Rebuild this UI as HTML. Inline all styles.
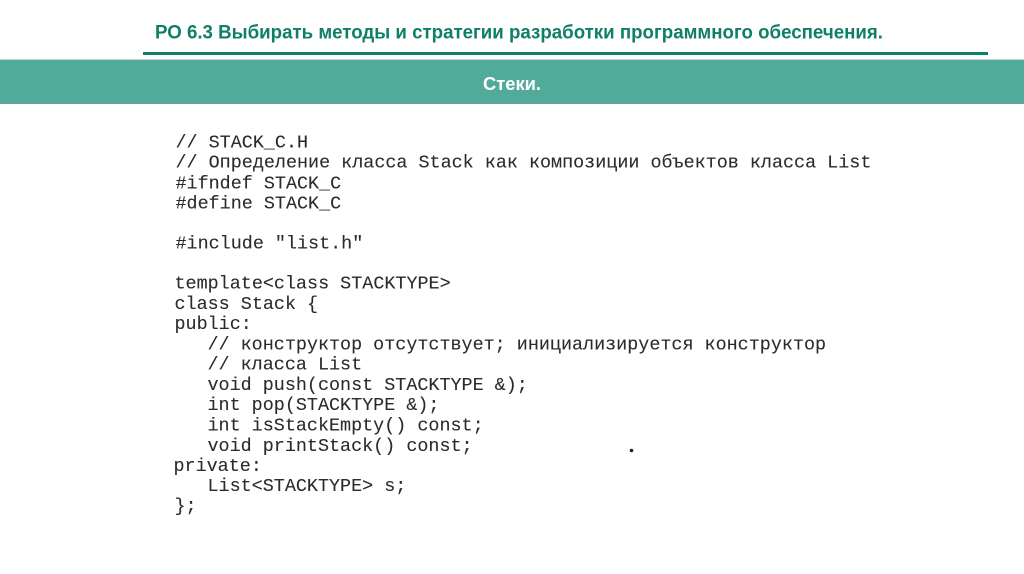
<!DOCTYPE html>
<html lang="ru">
<head>
<meta charset="utf-8">
<title>Стеки</title>
<style>
html,body{margin:0;padding:0;background:#fff;width:1024px;height:574px;overflow:hidden}
svg{display:block;position:absolute;left:0;top:0}
.code{filter:blur(.35px)}
.c{font-family:"Liberation Mono","DejaVu Sans Mono",monospace;font-size:18.42px;fill:#2b2b2b;stroke:#2b2b2b;stroke-width:.1px;white-space:pre}
.t{font-family:"Liberation Sans","DejaVu Sans",sans-serif;font-weight:bold;filter:blur(.25px)}
</style>
</head>
<body>
<svg width="1024" height="574" viewBox="0 0 1024 574" xmlns="http://www.w3.org/2000/svg">
<rect width="1024" height="574" fill="#fff"/>
<text class="t" x="155" y="38.5" font-size="19.5" fill="#0f7f66" textLength="728" lengthAdjust="spacingAndGlyphs">РО 6.3 Выбирать методы и стратегии разработки программного обеспечения.</text>
<rect x="143" y="52" width="845" height="3" fill="#0f7f66"/>
<rect x="0" y="59.5" width="1024" height="1" fill="#8fb5b8"/>
<rect x="0" y="60" width="1024" height="43" fill="#52ab9a"/>
<rect x="0" y="103" width="1024" height="1" fill="#6b9fae"/>
<text class="t" x="483" y="90" font-size="18.5" fill="#fff" textLength="58" lengthAdjust="spacingAndGlyphs">Стеки.</text>

<g class="code">
<text class="c" x="175.5" y="147.5" xml:space="preserve">// STACK_C.H</text>
<text class="c" x="175.5" y="167.5" xml:space="preserve">// Определение класса Stack как композиции объектов класса List</text>
<text class="c" x="175.5" y="188.3" xml:space="preserve">#ifndef STACK_C</text>
<text class="c" x="175.5" y="208.3" xml:space="preserve">#define STACK_C</text>
<text class="c" x="175.5" y="248.5" xml:space="preserve">#include "list.h"</text>
<text class="c" x="174.5" y="288.5" xml:space="preserve">template&lt;class STACKTYPE&gt;</text>
<text class="c" x="174.5" y="309" xml:space="preserve">class Stack {</text>
<text class="c" x="174.5" y="329" xml:space="preserve">public:</text>
<text class="c" x="207.5" y="349.3" xml:space="preserve">// конструктор отсутствует; инициализируется конструктор</text>
<text class="c" x="207.5" y="369.5" xml:space="preserve">// класса List</text>
<text class="c" x="207.5" y="390" xml:space="preserve">void push(const STACKTYPE &amp;);</text>
<text class="c" x="207.5" y="410" xml:space="preserve">int pop(STACKTYPE &amp;);</text>
<text class="c" x="207.5" y="430.5" xml:space="preserve">int isStackEmpty() const;</text>
<text class="c" x="207.5" y="451" xml:space="preserve">void printStack() const;</text>
<text class="c" x="173.5" y="471" xml:space="preserve">private:</text>
<text class="c" x="207.5" y="491" xml:space="preserve">List&lt;STACKTYPE&gt; s;</text>
<text class="c" x="174.5" y="511" xml:space="preserve">};</text>
</g>
<circle cx="631.5" cy="450.5" r="1.8" fill="#222"/>
</svg>
</body>
</html>
